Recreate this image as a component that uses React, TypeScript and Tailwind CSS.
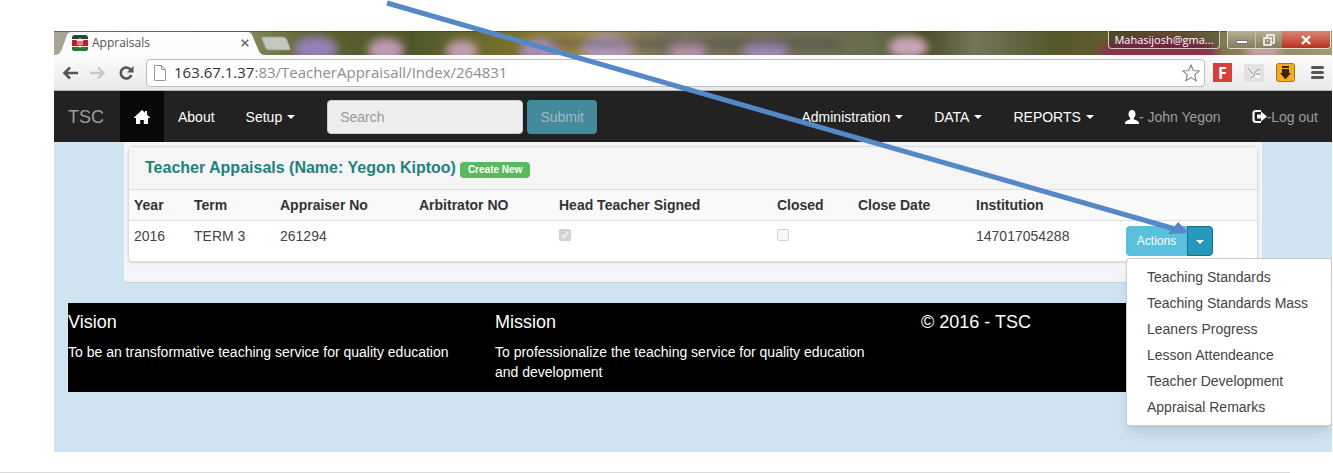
import { useState } from 'react'

const columns = [
  { label: 'Year', width: 'w-[60px]' },
  { label: 'Term', width: 'w-[86px]' },
  { label: 'Appraiser No', width: 'w-[139px]' },
  { label: 'Arbitrator NO', width: 'w-[140px]' },
  { label: 'Head Teacher Signed', width: 'w-[218px]' },
  { label: 'Closed', width: 'w-[81px]' },
  { label: 'Close Date', width: 'w-[118px]' },
  { label: 'Institution', width: 'w-[150px]' },
  { label: '', width: '' },
]

const actions = [
  'Teaching Standards',
  'Teaching Standards Mass',
  'Leaners Progress',
  'Lesson Attendeance',
  'Teacher Development',
  'Appraisal Remarks',
]

function Caret() {
  return <span className="inline-block border-x-4 border-t-4 border-x-transparent border-t-current align-middle" />
}

function Wallpaper() {
  return (
    <svg className="absolute inset-0 h-full w-full" viewBox="0 0 1279 24" preserveAspectRatio="none" aria-hidden="true">
      <defs>
        <linearGradient id="field">
          <stop offset="0" stopColor="#a9a696" />
          <stop offset="0.15" stopColor="#8b8a62" />
          <stop offset="0.2" stopColor="#5d6230" />
          <stop offset="0.28" stopColor="#4f5629" />
          <stop offset="0.36" stopColor="#78722c" />
          <stop offset="0.42" stopColor="#a08b4a" />
          <stop offset="0.48" stopColor="#77735a" />
          <stop offset="0.64" stopColor="#6a6c50" />
          <stop offset="0.68" stopColor="#474b22" />
          <stop offset="0.72" stopColor="#75765a" />
          <stop offset="0.78" stopColor="#55582a" />
          <stop offset="0.84" stopColor="#62602f" />
          <stop offset="1" stopColor="#a39a76" />
        </linearGradient>
        <filter id="soft" x="-20%" y="-50%" width="140%" height="200%">
          <feGaussianBlur stdDeviation="4" />
        </filter>
      </defs>
      <rect width="1279" height="24" fill="url(#field)" />
      <g filter="url(#soft)">
        <ellipse cx="262" cy="18" rx="22" ry="13" fill="#9480b4" />
        <ellipse cx="332" cy="19" rx="18" ry="12" fill="#c09aae" />
        <ellipse cx="408" cy="20" rx="16" ry="11" fill="#c29cac" />
        <ellipse cx="486" cy="20" rx="20" ry="12" fill="#a78cb9" />
        <ellipse cx="554" cy="18" rx="26" ry="15" fill="#ae97b4" />
        <ellipse cx="634" cy="20" rx="18" ry="11" fill="#b592a6" />
        <ellipse cx="712" cy="20" rx="22" ry="11" fill="#9e8bb5" />
        <ellipse cx="855" cy="16" rx="20" ry="11" fill="#c9a6b6" />
        <ellipse cx="1105" cy="22" rx="60" ry="17" fill="#8c3050" />
        <ellipse cx="1210" cy="20" rx="18" ry="9" fill="#c9a0a8" />
        <path d="M498 12H785v1H498z" stroke="#4a4550" strokeOpacity="0.5" strokeWidth="5" />
      </g>
      <path d="M0 .5H1279" stroke="#3f4226" strokeOpacity="0.6" />
    </svg>
  )
}

function TabStrip() {
  return (
    <div className="relative flex h-6 overflow-hidden">
      <Wallpaper />
      <div className="relative flex h-6 w-[214px] items-center pl-[18px]">
        <svg className="absolute inset-0 h-full w-full" viewBox="0 0 214 24" aria-hidden="true">
          <path d="M0 24 C5 24 6 22 8 18 L13 4 Q14 1 18 1 H193 Q197 1 198 4 L204 18 Q206 24 211 24 Z" fill="#fcfcfc" />
        </svg>
        <svg className="relative h-4 w-4" viewBox="0 0 16 16" aria-hidden="true">
          <rect width="16" height="16" rx="3" fill="#2c4434" />
          <path d="M0 11h16v2q0 3-3 3H3q-3 0-3-3z" fill="#247a35" />
          <rect y="4" width="16" height="8" fill="#f3e9e9" />
          <rect y="5" width="16" height="6" fill="#b81f2e" />
          <path d="M4.500 5.500h7M8 3v10M6 6v4M10 6v4" stroke="#f6dede" fill="none" />
        </svg>
        <span className="relative ml-1 grow font-['Open_Sans',sans-serif] text-xs text-[#555]">Appraisals</span>
        <button aria-label="Close tab" className="relative mr-[19px]">
          <svg className="h-2 w-2" viewBox="0 0 8 8" stroke="#666" strokeWidth="1.6">
            <path d="M.7.7l6.6 6.6M7.3.7L.7 7.3" />
          </svg>
        </button>
      </div>
      <button aria-label="New tab" className="relative -ml-2 mt-[5px] h-4">
        <svg className="h-4 w-8" viewBox="0 0 32 16">
          <path d="M3 1h20q3 0 4 3l3 8q1 2-2 2H9q-3 0-4-3L2 3q-1-2 1-2z" fill="#c3c8bf" stroke="#99a08c" />
        </svg>
      </button>
      <div className="relative ml-auto mr-px flex h-[18px] items-stretch gap-[7px]">
        <button className="w-[112px] rounded-b border border-t-0 border-[#d3cdb6] bg-black/20 font-['Open_Sans',sans-serif] text-[11px] leading-4 text-white">
          Mahasijosh@gma...
        </button>
        <div className="flex overflow-hidden rounded-b border border-t-0 border-[#e2dcc8]">
          <button aria-label="Minimize" className="flex w-7 items-end justify-center border-r border-[#c9c2a8] bg-linear-to-b from-[#b7b097] to-[#857d62] pb-1">
            <span className="h-1 w-3 border border-[#777] bg-white" />
          </button>
          <button aria-label="Restore" className="flex w-[26px] items-center justify-center bg-linear-to-b from-[#b7b097] to-[#857d62]">
            <svg className="h-3 w-3" viewBox="0 0 12 12" fill="none" stroke="#fff" strokeWidth="1.5">
              <path d="M4 3V1h7v8H9M1 4h7v7H1zM4 7h1" />
            </svg>
          </button>
          <button aria-label="Close" className="flex w-12 items-center justify-center bg-linear-to-b from-[#d98470] to-[#b8301c]">
            <svg className="h-[10px] w-[10px]" viewBox="0 0 10 10" stroke="#fff" strokeWidth="2.4">
              <path d="M1 1l8 8M9 1L1 9" />
            </svg>
          </button>
        </div>
      </div>
    </div>
  )
}

function Toolbar() {
  return (
    <div className="flex h-9 items-center border-b border-[#b5b5b5] bg-linear-to-b from-[#fcfcfc] to-[#e9e9e9] px-2">
      <button aria-label="Back" className="w-4">
        <svg className="h-4 w-4" viewBox="0 0 16 16" fill="none" stroke="#555" strokeWidth="2.6">
          <path d="M16 8H3M8 2.5L2.5 8 8 13.5" />
        </svg>
      </button>
      <button aria-label="Forward" className="ml-3 w-4">
        <svg className="h-4 w-4" viewBox="0 0 16 16" fill="none" stroke="#c9c9c9" strokeWidth="2.4">
          <path d="M0 8h13M8 2.5L13.500 8 8 13.5" />
        </svg>
      </button>
      <button aria-label="Reload" className="ml-3 w-4">
        <svg className="h-4 w-4" viewBox="0 0 16 16">
          <path d="M12.500 4.500A5.500 5.500 0 1 0 13.400 10" fill="none" stroke="#555" strokeWidth="2.600" />
          <path d="M15.500 1v6.500H9z" fill="#555" />
        </svg>
      </button>
      <div className="ml-3 flex h-7 grow items-center rounded-sm border border-[#bdbdbd] bg-white pl-[7px] pr-1">
        <svg className="h-4 w-3" viewBox="0 0 12 16" fill="#fff" stroke="#999">
          <path d="M.5.5h7l4 4v11H.5zM7.500.5v4h4" />
        </svg>
        <span className="ml-2 grow whitespace-nowrap font-['Open_Sans',sans-serif] text-[15px] text-[#8e8e8e]">
          <span className="text-[#333]">163.67.1.37</span>:83/TeacherAppraisall/Index/264831
        </span>
        <button aria-label="Bookmark this page">
          <svg className="h-[18px] w-[18px]" viewBox="0 0 18 18" fill="#fff" stroke="#888" strokeWidth="1.200">
            <path d="M9 1l2.300 5.500 5.900.5-4.500 3.900 1.400 5.800L9 13.600l-5.100 3.100 1.400-5.800L.8 7l5.900-.5z" />
          </svg>
        </button>
      </div>
      <button aria-label="Flipboard" className="ml-2 flex h-[19px] w-[19px] items-center justify-center bg-[#d2423a] font-['Open_Sans',sans-serif] text-base font-bold text-white">
        F
      </button>
      <button aria-label="Extension" className="ml-3 h-[18px] w-5 bg-[#e2e2e2]">
        <svg className="h-[18px] w-5" viewBox="0 0 20 18" fill="none">
          <path d="M4 4l5 6M16 5q-5 1-6 6M6 14q4-1 5-4M11 9l4 5M12 10h4" stroke="#fff" strokeWidth="2.800" />
          <path d="M4 4l5 6M16 5q-5 1-6 6M6 14q4-1 5-4M12 10h4" stroke="#aaa" strokeWidth="1.400" />
        </svg>
      </button>
      <button aria-label="Download" className="ml-3 h-[19px] w-[19px]">
        <svg className="h-[19px] w-[19px]" viewBox="0 0 19 19">
          <rect x=".5" y=".5" width="18" height="18" rx="2" fill="#f5ab23" stroke="#a8741a" />
          <path d="M6 3h7v2H6zM6 6h7v4h2l-5.500 6.500L4 10h2z" fill="#3a2508" />
        </svg>
      </button>
      <button aria-label="Menu" className="ml-4 flex w-[13px] flex-col gap-[2px]">
        <span className="h-[3px] w-full rounded-sm bg-[#555]" />
        <span className="h-[3px] w-full rounded-sm bg-[#555]" />
        <span className="h-[3px] w-full rounded-sm bg-[#555]" />
      </button>
    </div>
  )
}

function Navbar() {
  return (
    <nav className="flex h-[51px] items-center bg-[#222] pr-[14px] text-sm text-white">
      <a href="#" className="w-[66px] pl-[14px] text-lg text-[#9d9d9d]">TSC</a>
      <a href="#" aria-label="Home" className="flex w-11 items-center justify-center self-stretch bg-[#080808]">
        <svg className="h-4 w-4" viewBox="0 0 16 16" fill="#fff">
          <path d="M8 1l3 2.800V2h2v3.700L16 8.600V9h-2v6H9.800v-4H6.200v4H2V9H0v-.4z" />
        </svg>
      </a>
      <a href="#" className="ml-[14px]">About</a>
      <a href="#" className="ml-[31px] flex items-center gap-[5px]">Setup <Caret /></a>
      <form className="ml-8 flex gap-1" onSubmit={e => e.preventDefault()}>
        <input
          type="text"
          aria-label="Search"
          placeholder="Search"
          className="h-[34px] w-[196px] rounded border border-[#ccc] bg-[#eee] px-3 placeholder:text-[#999]"
        />
        <button className="h-[34px] w-[70px] rounded bg-[#458a9c] text-[#a3b9c0]">Submit</button>
      </form>
      <div className="ml-auto flex items-center gap-[31px]">
        <a href="#" className="flex items-center gap-[5px]">Administration <Caret /></a>
        <a href="#" className="flex items-center gap-[5px]">DATA <Caret /></a>
        <a href="#" className="flex items-center gap-[5px]">REPORTS <Caret /></a>
        <a href="#" className="flex items-center text-[#9d9d9d]">
          <svg className="h-[14px] w-[14px]" viewBox="0 0 14 14" fill="#fff" aria-hidden="true">
            <path d="M7 0c2.200 0 3.500 1.700 3.500 4 0 1.800-.8 3.300-1.800 4v1.300c2.600.8 5.300 2 5.300 3.500V14H0v-1.200c0-1.500 2.700-2.700 5.300-3.500V8c-1-.7-1.800-2.200-1.800-4C3.500 1.700 4.800 0 7 0z" />
          </svg>
          - John Yegon
        </a>
        <a href="#" className="flex items-center text-[#9d9d9d]">
          <svg className="h-[15px] w-[15px]" viewBox="0 0 15 15" aria-hidden="true">
            <path d="M9 2H4Q1.500 2 1.500 4.500v6Q1.500 13 4 13h5" fill="none" stroke="#fff" strokeWidth="2.200" />
            <path d="M9 2.500l6 5-6 5V9.500H5v-4h4z" fill="#fff" />
          </svg>
          -Log out
        </a>
      </div>
    </nav>
  )
}

function ActionsMenu() {
  const [open, setOpen] = useState(true)

  return (
    <div className="relative flex h-[30px] w-max text-xs text-white">
      <button className="w-[61px] rounded-l bg-[#5bc0de]">Actions</button>
      <button
        aria-label="Toggle actions"
        aria-expanded={open}
        onClick={() => setOpen(!open)}
        className="w-[26px] rounded-r border border-[#1b6d85] bg-[#269abc]"
      >
        <Caret />
      </button>
      {open && (
        <ul className="absolute left-0 top-8 z-10 w-[206px] rounded border border-black/20 bg-white py-[5px] text-sm text-[#444] shadow-lg">
          {actions.map(action => (
            <li key={action}>
              <a href="#" className="block whitespace-nowrap px-5 py-[3px] leading-5">{action}</a>
            </li>
          ))}
        </ul>
      )}
    </div>
  )
}

function AppraisalPanel() {
  return (
    <section className="mx-[70px] rounded-b border-b border-[#c6d3de] bg-[#f4f5f8] px-1 pb-5 pt-1">
      <div className="rounded border border-[#ddd] bg-white shadow-sm">
        <div className="flex h-[42px] items-center gap-1 bg-[#f5f5f5] pl-4">
          <h3 className="text-base font-bold text-[#1f827c]">Teacher Appaisals (Name: Yegon Kiptoo)</h3>
          <a href="#" className="mt-1 rounded-sm bg-[#5cb85c] px-2 text-[10px] font-bold leading-4 text-white">Create New</a>
        </div>
        <table className="w-full table-fixed text-left text-sm text-[#444]">
          <thead>
            <tr className="h-[31px] border-y border-[#ddd] bg-[#f9f9f9] text-[#333]">
              {columns.map(column => (
                <th key={column.label} className={`${column.width} pl-[5px] font-bold`}>{column.label}</th>
              ))}
            </tr>
          </thead>
          <tbody>
            <tr className="h-10 align-top">
              <td className="pl-[5px] pt-[5px]">2016</td>
              <td className="pl-[5px] pt-[5px]">TERM 3</td>
              <td className="pl-[5px] pt-[5px]">261294</td>
              <td></td>
              <td className="pl-[5px] pt-[5px]">
                <input type="checkbox" aria-label="Head Teacher Signed" checked disabled className="h-3 w-3" />
              </td>
              <td className="pl-[5px] pt-[5px]">
                <input type="checkbox" aria-label="Closed" disabled className="h-3 w-3" />
              </td>
              <td></td>
              <td className="pl-[5px] pt-[5px]">147017054288</td>
              <td className="pl-[5px] pt-[5px]"><ActionsMenu /></td>
            </tr>
          </tbody>
        </table>
      </div>
    </section>
  )
}

function Footer() {
  return (
    <footer className="ml-[14px] mt-5 grid h-[89px] grid-cols-[427fr_426fr_411fr] bg-black pt-[9px] text-sm text-white">
      <div>
        <h4 className="text-lg leading-5">Vision</h4>
        <p className="mt-[10px] leading-5">To be an transformative teaching service for quality education</p>
      </div>
      <div>
        <h4 className="text-lg leading-5">Mission</h4>
        <p className="mt-[10px] pr-9 leading-5">To professionalize the teaching service for quality education and development</p>
      </div>
      <h4 className="text-lg leading-5">© 2016 - TSC</h4>
    </footer>
  )
}

export default function App() {
  return (
    <div className="relative overflow-hidden bg-white pt-[31px] font-['Liberation_Sans',Arial,sans-serif]">
      <div className="ml-[54px] mr-px bg-[#d0e3f0] pb-[60px]">
        <TabStrip />
        <Toolbar />
        <Navbar />
        <AppraisalPanel />
        <Footer />
      </div>
      <hr className="mr-[43px] mt-5 border-[#d9d9d9]" />
      {/* callout arrow pointing at the actions toggle */}
      <svg className="pointer-events-none absolute left-0 top-0 z-20 h-[473px] w-[1333px]" viewBox="0 0 1333 473" aria-hidden="true">
        <path d="M387 3L1175 229" stroke="#5488c7" strokeWidth="5" />
        <path d="M1189 233l-21 1 10-12z" fill="#5488c7" />
      </svg>
    </div>
  )
}
